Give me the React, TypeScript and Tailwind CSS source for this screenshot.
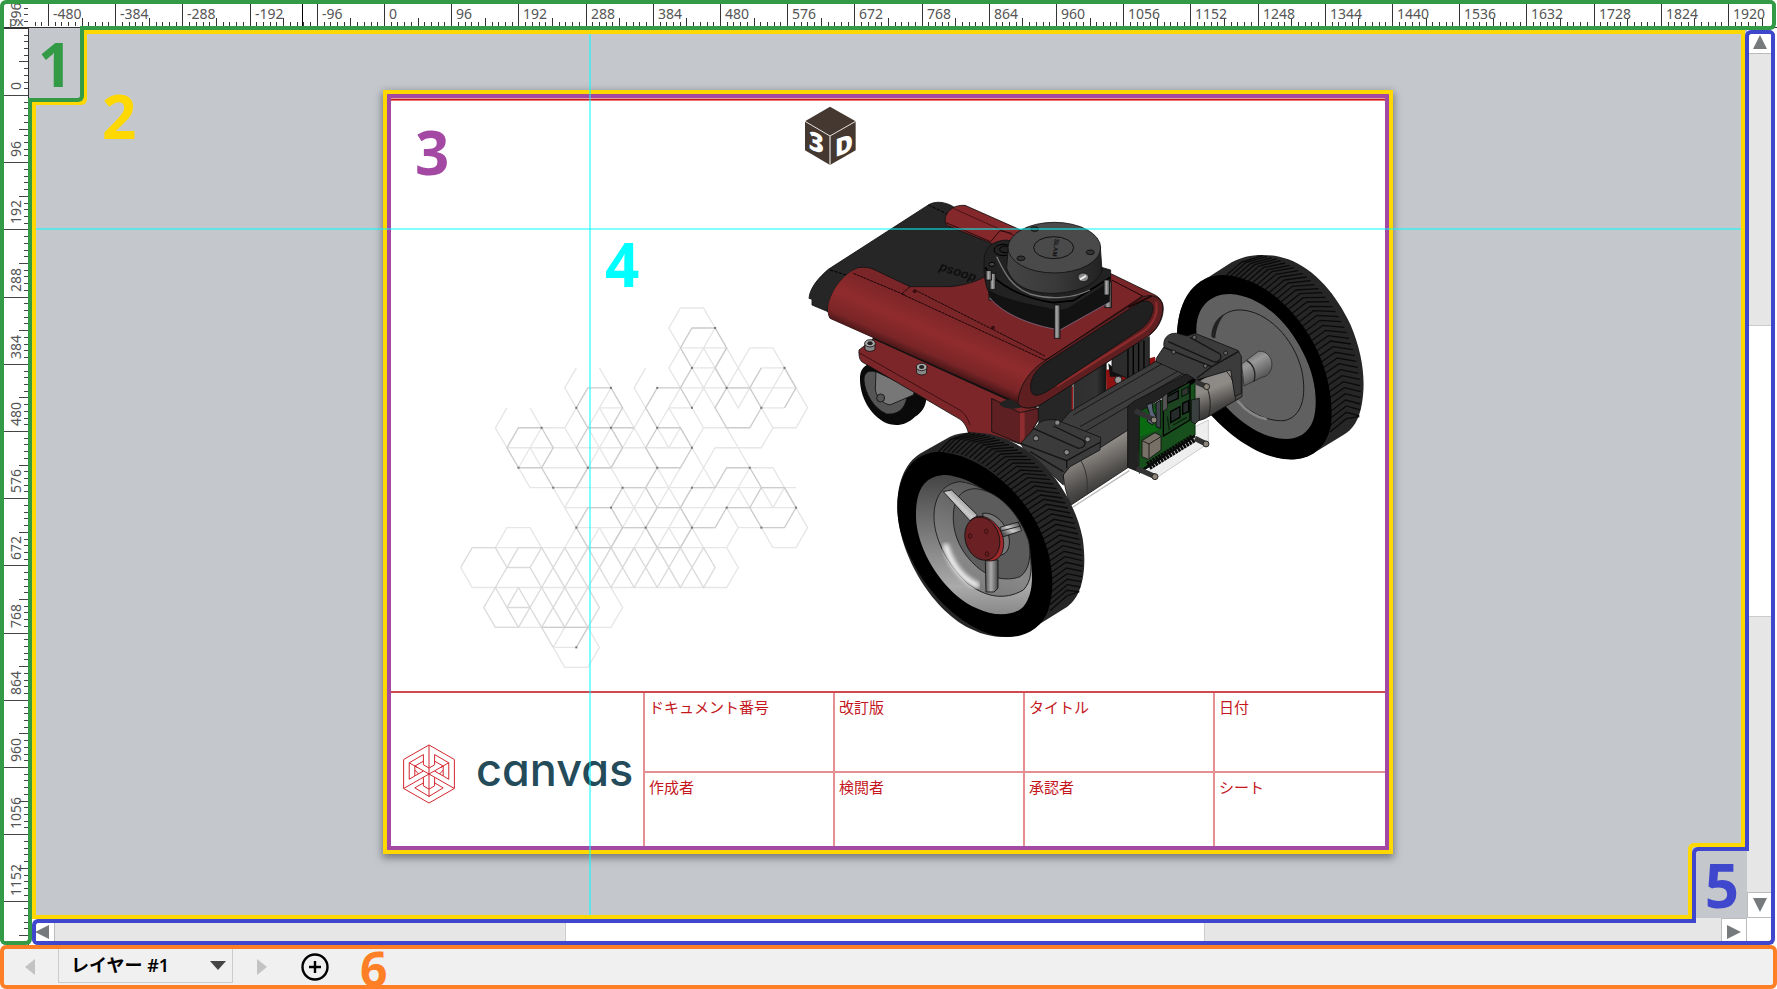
import React from "react";

const RULER_FONT = '"Noto Sans", sans-serif';
const LABEL_FONT = "font-['Open_Sans','Noto_Sans',sans-serif] font-bold leading-none";

const UNIT = 0.7;

type Tick = { pos: number; kind: number };

function ticks(origin: number, from: number, to: number): Tick[] {
  const list: Tick[] = [];
  for (let n = -60; n < 206; n++) {
    const pos = Math.round(origin + n * 9.6 * UNIT);
    if (pos < from || pos > to) continue;
    list.push({ pos, kind: n % 10 === 0 ? 2 : n % 5 === 0 ? 1 : 0 });
  }
  return list;
}

function labels(origin: number, from: number, to: number) {
  const list: { pos: number; text: string }[] = [];
  for (let n = -5; n <= 20; n++) {
    const pos = Math.round(origin + n * 96 * UNIT);
    if (pos < from || pos > to) continue;
    list.push({ pos, text: String(n * 96) });
  }
  return list;
}

function HorizontalRuler() {
  const top = [22, 18, 4];
  return (
    <svg className="block h-7 w-full overflow-hidden" aria-label="Horizontal ruler" role="img">
      {ticks(384, 30, 1771).map((t) => (
        <rect key={t.pos} x={t.pos} y={top[t.kind]} width={1} height={26 - top[t.kind]} fill="#333" />
      ))}
      <rect x={302} y={4} width={1} height={22} fill="#000" />
      {labels(384, 30, 1740).map((l) => (
        <text key={l.text} x={l.pos + 5} y={19} fontSize={14} fontFamily={RULER_FONT} fill="#555">
          {l.text}
        </text>
      ))}
      <rect x={0} y={27} width="100%" height={1} fill="#333" />
      <text x={9} y={26} fontSize={13} fontFamily={RULER_FONT} fill="#555">px</text>
    </svg>
  );
}

function VerticalRuler() {
  const left = [24, 19, 4];
  return (
    <svg className="block h-full w-[29px] overflow-visible" aria-label="Vertical ruler" role="img">
      {ticks(67, -20, 913).map((t) => (
        <rect key={t.pos} x={left[t.kind]} y={t.pos} width={28 - left[t.kind]} height={1} fill="#444" />
      ))}
      {labels(67, -10, 913).map((l) => (
        <text
          key={l.text}
          transform={`translate(21 ${l.pos - 5}) rotate(-90)`}
          fontSize={14}
          fontFamily={RULER_FONT}
          fill="#555"
        >
          {l.text}
        </text>
      ))}
      <rect x={4} y={0} width={24} height={1} fill="#333" />
      <rect x={28} y={0} width={1} height="100%" fill="#333" />
    </svg>
  );
}

/* ---------- hexagon pattern ---------- */

const hexStrong = [
  "19,2 20,1 22,1 23,2 22,3 23,4 25,4", "25,4 26,5 25,6 23,6 22,5 23,4", "19,2 20,3 19,4 20,5", "17,4 19,4",
  "17,4 16,5 17,6 19,6 20,7 19,8 17,8 16,7 17,6", "11,4 13,4 14,5 13,6 11,6 10,5 11,4", "25,4 26,3",
  "4,7 5,6 7,6", "7,6 8,7 7,8 5,8", "4,7 5,8", "7,8 8,9 10,9 11,8 10,7 11,6", "13,6 15,6", "11,8 13,8 14,7 13,6", "14,9 16,9 17,8",
  "14,9 13,10 14,11 16,11 17,10 16,9", "11,10 13,10", "11,10 10,11 11,12 13,12 14,11", "20,9 22,9", "23,10 22,11 20,11 19,10 20,9",
  "22,9 23,8 25,8 26,9 28,9 29,10 28,11 26,11 25,10 26,9", "23,10 25,10", "17,10 19,10", "16,11 17,12 19,12 20,11",
  "28,5 29,4", "28,3 29,4", "10,17 11,16 7,16",
];
const hexMedium = [
  "5,12 7,12 8,13", "5,12 4,13 6,13 7,14", "3,14 4,13", "0,13 1,12 3,12 4,13", "3,14 2,15 3,16 5,16 7,14", "3,14 5,16",
  "4,15 6,15", "4,15 5,14", "6,13 7,12", "7,14 9,12", "7,12 11,16", "6,13 7,14 9,16", "6,15 7,16", "5,14 8,17", "7,16 11,12", "9,16 12,13",
  "9,16 11,14", "8,15 9,16", "11,12 13,14 15,12", "13,12 15,14 17,12", "15,12 17,14 19,12", "17,12 19,14 21,12", "19,12 21,14 22,13 21,12",
  "11,14 13,12", "9,12 12,15 11,16", "9,14 10,13 11,12",
];
const hexLight = [
  "19,2 18,1 19,0 21,0 22,1 25,4", "19,2 18,3 19,4", "19,2 23,2", "22,1 20,3", "21,2 24,5 25,4", "20,3 22,3", "23,2 21,4 20,5", "20,3 22,5", "21,2 22,3",
  "24,3 25,2 27,2 28,3 30,5 29,6 27,6 26,5", "24,3 23,4", "26,3 28,3 26,5 28,5", "19,4 29,4", "23,6 25,8", "27,6 26,7 22,7 21,8",
  "10,3 9,4 10,5", "12,3 13,4", "16,3 15,4 16,5", "13,4 11,6", "12,5 14,5", "12,5 14,7", "14,5 15,6", "17,6 19,4", "18,5 20,5", "18,5 20,7",
  "4,5 3,6 4,7", "6,5 7,6 9,6 10,5", "4,7 20,7", "5,8 6,9 8,9", "7,6 5,8", "6,7 7,8", "6,7 7,8 17,8", "9,6 10,7",
  "8,9 10,11", "10,9 29,9", "9,10 29,10", "10,11 22,11", "11,8 9,10", "11,6 16,11", "13,6 11,8", "13,8 15,10 17,12", "15,6 13,8", "17,8 13,12",
  "15,6 19,10", "19,8 15,12", "16,7 20,11", "16,5 13,8", "17,6 18,7 19,6", "21,6 20,7", "21,6 23,6", "20,5 21,6", "20,7 22,9", "21,8 17,12", "22,9 19,12",
  "25,8 27,8 29,10 30,11 29,12 27,12 26,11 24,11 23,10", "25,8 23,10", "24,9 25,10", "26,9 27,10 28,9", "24,11 23,12 1,12",
  "20,11 21,12", "23,12 24,13 23,14 1,14 0,13", "3,12 4,11 6,11 7,12", "12,11 14,13", "12,11 10,13", "10,11 9,12", "14,11 12,13", "16,11 14,13",
  "13,14 14,15 13,16 3,16", "8,17 9,18 11,18 12,17 11,16", "8,17 10,17", "9,16 8,17", "16,11 19,14", "18,11 19,12", "18,11 16,13",
];
const hexDots =
  "22,1 20,3 28,3 23,4 17,4 13,4 10,5 20,5 26,5 7,6 13,6 17,6 20,7 5,8 11,8 17,8 25,8 8,9 14,9 20,9 13,10 23,10 29,10 10,11 16,11 20,11 26,11 10,17";

const node = (s: string): [number, number] => {
  const [i, j] = s.split(",").map(Number);
  return [212 + i * 34.7, 54 + j * 59.9];
};
const hexPath = (lines: string[]) =>
  lines.map((l) => "M" + l.trim().split(" ").map((p) => node(p).join(" ")).join("L")).join("");

function HexPattern() {
  return (
    <g transform="translate(390 290) scale(0.3333)" fill="none" strokeWidth={4}>
      <path d={hexPath(hexLight)} stroke="#e6e6e6" />
      <path d={hexPath(hexMedium)} stroke="#dadada" />
      <path d={hexPath(hexStrong)} stroke="#cccccc" />
      {hexDots.split(" ").map((d) => {
        const [x, y] = node(d);
        return <rect key={d} x={x - 3} y={y - 3} width={6} height={6} fill="#777" />;
      })}
    </g>
  );
}

/* ---------- robot ---------- */

type P = [number, number];
const bez = (p: P[], t: number): P => {
  const u = 1 - t;
  const f = (k: 0 | 1) =>
    u * u * u * p[0][k] + 3 * u * u * t * p[1][k] + 3 * u * t * t * p[2][k] + t * t * t * p[3][k];
  return [f(0), f(1)];
};
function treads(inner: P[], outer: P[], count: number) {
  let d = "";
  for (let n = 0; n < count; n++) {
    const t = n / count;
    const a = bez(inner, t);
    const b = bez(outer, Math.min(1, t + 0.05));
    const m1 = bez(outer, t);
    const m: P = [a[0] * 0.5 + m1[0] * 0.5 + 4, a[1] * 0.5 + m1[1] * 0.5 - 8];
    d += `M${a[0].toFixed(0)} ${a[1].toFixed(0)}L${m[0].toFixed(0)} ${m[1].toFixed(0)}L${b[0].toFixed(0)} ${b[1].toFixed(0)}`;
  }
  return d;
}

const edge = { stroke: "#111", strokeWidth: 2.5 };

function RightWheel() {
  return (
    <g transform="translate(1080 230) scale(0.3333)">
      <path d="M291 320C292 220 335 165 385 142L455 97C500 70 570 68 625 88C705 118 770 195 812 285C848 370 858 450 846 520C838 570 818 600 790 615L700 670C650 700 590 690 520 655C430 600 340 520 305 420Z" fill="#262626" />
      <path d={treads([[440, 135], [600, 160], [750, 380], [750, 625]], [[520, 75], [700, 75], [870, 330], [838, 560]], 38)} fill="none" stroke="#0a0a0a" strokeWidth={4} />
      <path d="M291 320C292 200 350 135 430 135C530 140 625 215 690 320C745 410 762 520 752 590C735 665 680 695 610 687C520 675 420 600 350 500C305 430 291 370 291 320Z" fill="#000" />
      <path d="M349 300C350 230 390 192 450 192C540 197 620 270 668 365C708 440 715 520 700 570C680 625 630 635 580 622C500 600 420 530 380 440C358 385 349 340 349 300Z" fill="#606060" />
      <path d="M400 325C402 268 435 238 485 240C560 245 640 320 665 420C682 500 665 562 612 572C560 575 500 545 465 500" fill="none" stroke="#1a1a1a" strokeWidth={3} />
      <path d="M394 320C394 290 410 262 434 252C416 275 408 300 406 325Z" fill="#222" />
      <path d="M472 512C500 545 530 562 560 568" fill="none" stroke="#888" strokeWidth={8} />
      <path d="M485 402L535 364C562 360 580 388 575 412C570 432 560 440 545 442L492 468Z" fill="url(#axle)" stroke="#222" strokeWidth={2} />
      <path d="M500 392C520 402 530 428 522 455" fill="none" stroke="#222" strokeWidth={4} />
    </g>
  );
}

function Body() {
  return (
    <g transform="translate(790 190) scale(0.3333)">
      {/* caster */}
      <path d="M210 560C212 535 225 525 245 520L410 620C408 650 395 668 375 680C350 705 320 710 290 700C240 675 208 620 210 560Z" fill="#0a0a0a" />
      <path d="M222 570C222 548 235 540 255 545L350 625C345 655 325 675 290 672C250 655 225 610 222 570Z" fill="#555" {...edge} />
      <path d="M258 545L375 600L370 615L300 645C275 640 260 620 256 600Z" fill="#777" {...edge} />
      <circle cx="272" cy="624" r="12" fill="#555" {...edge} />
      {/* columns and fins */}
      <path d="M745 600L848 560L848 720L745 750Z" fill="#262626" />
      <path d="M850 560L950 505L950 640L850 710Z" fill="url(#column)" />
      <path d="M847 590V690" stroke="#a01818" strokeWidth={4} />
      <path d="M948 540L1095 500L1100 530L950 610Z" fill="#8f1212" />
      <path d="M955 520L1000 560L960 560Z" fill="#111" />
      <path d="M966 500L1078 440L1078 530L1020 568L966 545Z" fill="#2c2c2c" {...edge} />
      <path d="M1014 475V565M1030 468V556M1046 460V546M1062 452V538" stroke="#000" strokeWidth={4} />
      <circle cx="985" cy="570" r="11" fill="#999" {...edge} />
      {/* lower plate */}
      <path d="M207 480L252 445L690 640L745 655L745 690L700 765L605 735L535 728C530 708 520 692 500 682L215 515C208 508 206 495 207 480Z" fill="#7c2629" {...edge} />
      <path d="M207 488L500 655C520 665 532 680 540 705" fill="none" stroke="#3d1012" strokeWidth={3} />
      <path d="M605 625L690 668L745 655L745 690L702 765L605 725Z" fill="#5e2022" {...edge} />
      <path d="M690 668L704 668L704 760L690 758Z" fill="#8e2c2f" />
      <path d="M250 440L690 640" stroke="#111" strokeWidth={14} />
      <ellipse cx="668" cy="642" rx="38" ry="14" fill="#222" />
      {/* black rear panel */}
      <path d="M57 325C60 290 90 260 115 238L415 45C435 32 465 35 490 50L640 120L620 300L480 290L360 290L150 380L66 345V328Z" fill="#262626" {...edge} />
      <path d="M120 240L190 262M415 45L480 76" fill="none" stroke="#000" strokeWidth={3} strokeDasharray="10 4" />
      <text x="0" y="0" transform="translate(560 256) rotate(198)" fontSize="38" fontFamily="Liberation Sans, sans-serif" fontStyle="italic" fontWeight="700" fill="#0d0d0d">doosd</text>
      {/* rear red strip */}
      <path d="M466 85C470 60 495 44 525 46L710 128L650 190L600 158L475 108C466 102 464 96 466 85Z" fill="#84282b" {...edge} />
      <path d="M490 55L690 145" stroke="#2b0a0b" strokeWidth={2} />
      <path d="M468 98L602 155L630 122L665 130" fill="none" stroke="#2b0a0b" strokeWidth={3} />
      {/* body */}
      <path d="M115 345C125 300 160 250 205 233C225 230 240 232 255 240L360 290H480C540 284 575 268 600 250L965 252L1095 315C1120 328 1125 352 1115 385C1105 412 1090 428 1075 438L750 645C720 660 690 655 684 635L120 385C114 375 113 360 115 345Z" fill="#7a2629" {...edge} />
      <path d="M115 345C125 300 160 250 205 234L765 512C720 540 688 590 684 638L120 385C114 375 113 360 115 345Z" fill="url(#roll)" />
      <path d="M190 250L345 315M360 290L335 312L765 510L795 495M375 300L765 498" fill="none" stroke="#1c0506" strokeWidth={3} strokeDasharray="9 2" />
      <path d="M765 512L1058 318L965 270" fill="none" stroke="#1c0506" strokeWidth={3} />
      <circle cx="374" cy="304" r="6" fill="#3a0f11" />
      <circle cx="609" cy="413" r="6" fill="#3a0f11" />
      <path d="M684 640C685 590 720 540 765 512L1060 320C1085 312 1112 320 1118 345C1121 380 1105 415 1075 438L750 645C720 660 690 655 684 640Z" fill="#5f1f21" {...edge} />
      <path d="M1098 335C1106 370 1090 405 1055 428L800 588" fill="none" stroke="#8c2a2c" strokeWidth={7} />
      <path d="M722 590C722 560 745 530 780 510L1030 350C1065 322 1095 330 1088 365C1080 395 1060 412 1045 422L770 605C740 622 722 620 722 590Z" fill="#202020" {...edge} />
      <path d="M1015 352L1085 318" stroke="#1c0506" strokeWidth={5} />
      {/* screws */}
      {[[240, 466], [395, 537]].map(([x, y]) => (
        <g key={x}>
          <path d={`M${x - 15} ${y - 6}V${y + 12}C${x - 8} ${y + 20} ${x + 8} ${y + 20} ${x + 15} ${y + 12}V${y - 6}Z`} fill="#888" {...edge} />
          <ellipse cx={x} cy={y - 6} rx="16" ry="11" fill="#aaa" {...edge} />
          <ellipse cx={x} cy={y - 6} rx="8" ry="6" fill="#222" />
        </g>
      ))}
      {/* lidar */}
      {[[597, 265, 65], [945, 275, 78]].map(([x, y, h]) => (
        <rect key={x} x={x} y={y} width="19" height={h} fill="url(#post)" {...edge} />
      ))}
      <path d="M592 290L600 322C640 370 720 404 810 418L958 335V280Z" fill="#121212" {...edge} />
      <path d="M600 324C640 372 720 406 810 420L958 337" fill="none" stroke="#7c7c9a" strokeWidth={2} />
      <path d="M583 205C585 170 610 152 650 150L962 240V275L840 352C820 364 790 362 770 354C690 340 620 320 592 298C585 275 580 250 583 205Z" fill="#222" {...edge} />
      <path d="M585 232C620 285 700 325 790 338L850 332L962 262" fill="none" stroke="#000" strokeWidth={5} />
      <path d="M620 200C640 240 660 290 720 312C780 330 850 325 900 300" fill="none" stroke="#777" strokeWidth={4} />
      <ellipse cx="640" cy="180" rx="28" ry="17" fill="none" stroke="#000" strokeWidth={3} />
      <ellipse cx="645" cy="178" rx="16" ry="10" fill="none" stroke="#000" strokeWidth={3} />
      <ellipse cx="606" cy="223" rx="9" ry="6" fill="#444" stroke="#000" strokeWidth={3} />
      <path d="M655 170L650 235C670 290 720 310 790 310C870 308 925 280 936 240L931 170Z" fill="url(#drum)" {...edge} />
      <ellipse cx="793" cy="173" rx="139" ry="76" fill="#4a4a4a" {...edge} />
      <ellipse cx="791" cy="173" rx="60" ry="33" fill="none" stroke="#111" strokeWidth={3} />
      <text transform="translate(794 146) rotate(97)" fontSize="19" fontFamily="Liberation Sans, sans-serif" fontWeight="700" fill="#111">SLAM</text>
      {[[734, 117], [693, 205], [901, 187]].map(([x, y]) => (
        <ellipse key={x} cx={x} cy={y} rx="12" ry="7" fill="#333" stroke="#111" strokeWidth={3} />
      ))}
      <ellipse cx="880" cy="262" rx="16" ry="13" fill="#888" {...edge} />
      <path d="M870 268L888 258" stroke="#eee" strokeWidth={6} />
      {[[793, 345, 100], [600, 250, 48], [942, 270, 45], [588, 242, 28]].map(([x, y, h]) => (
        <rect key={x} x={x} y={y} width="17" height={h} fill="url(#post)" {...edge} />
      ))}
    </g>
  );
}

function Chassis() {
  return (
    <g transform="translate(1080 230) scale(0.3333)">
      {/* acrylic plate */}
      <path d="M345 590L385 570V640L235 740L190 730L345 630Z" fill="#eee" stroke="#ccc" strokeWidth={3} />
      {/* right motor */}
      <path d="M330 470L445 400L486 440V500L385 560C370 570 350 575 335 570Z" fill="url(#motor)" {...edge} />
      <path d="M375 460C392 490 395 530 385 560M440 425C460 445 470 480 466 512" fill="none" stroke="#222" strokeWidth={3} />
      {/* left motor */}
      <path d="M-55 640L145 540V712L-28 826C-42 790 -52 750 -52 700Z" fill="url(#motor)" {...edge} />
      <path d="M-5 680C18 712 26 750 20 794" fill="none" stroke="#333" strokeWidth={3} />
      <path d="M-22 832L148 722" stroke="#bbb" strokeWidth={4} />
      {/* beam */}
      <path d="M-60 580L-30 545L260 375L345 405L330 440L160 530V590L50 660L-20 640Z" fill="#3d3d3d" {...edge} />
      <path d="M-20 555L275 385M0 590L310 415M15 605L320 425" fill="none" stroke="#171717" strokeWidth={3} />
      {/* right bracket */}
      <path d="M229 385L252 350C248 325 265 308 290 310L322 318L345 310L475 362L484 380V490L465 500L452 420L350 450L229 395Z" fill="#3b3b3b" {...edge} />
      <path d="M265 335L400 395C415 400 428 385 420 372L330 322M252 352L395 410L475 365M395 410L350 445" fill="none" stroke="#141414" strokeWidth={4} />
      {[[281, 366], [376, 408], [437, 369], [343, 322]].map(([x, y]) => (
        <circle key={x} cx={x} cy={y} r="6" fill="#666" {...edge} />
      ))}
      {/* left bracket */}
      <path d="M-178 640L-125 582C-110 565 -90 572 -75 568L62 622L60 660L-30 710L-50 735V765L-170 655Z" fill="#3b3b3b" {...edge} />
      <path d="M-140 595L-5 655C10 655 20 645 12 632L-80 588M-178 640L-40 692L62 636M-40 692V715M-150 665L-50 725" fill="none" stroke="#141414" strokeWidth={4} />
      {[[-132, 625], [-40, 667], [23, 628], [-68, 578]].map(([x, y]) => (
        <circle key={x} cx={x} cy={y} r="8" fill="#888" {...edge} />
      ))}
      {/* circuit board */}
      <path d="M143 530L160 515L320 432L340 445L180 545L175 725L143 712Z" fill="#222" {...edge} />
      <path d="M178 545L345 458V615L178 730Z" fill="#17501c" stroke="#062b0a" strokeWidth={3} />
      <path d="M180 560L235 530V600L180 620Z" fill="#0a6b12" />
      <path d="M250 500L330 455V570L250 618Z" fill="#1c4420" stroke="#000" strokeWidth={4} />
      <path d="M272 545L300 530V562L272 578ZM308 520L326 512V545L308 553ZM262 500L295 482V505L262 520Z" fill="#262b2c" stroke="#000" strokeWidth={4} />
      <path d="M262 560L268 600M280 585L320 562M305 480L325 470V490L305 500Z" fill="#333" stroke="#0a200c" strokeWidth={4} />
      <path d="M228 520L242 510V595L228 590Z" fill="#3d4248" stroke="#111" strokeWidth={3} />
      <path d="M200 525L216 518L220 545L228 560L218 585L202 575L208 550Z" fill="#5b6478" stroke="#111" strokeWidth={3} />
      <path d="M248 500L262 490V535L248 545Z" fill="#555" stroke="#111" strokeWidth={2} />
      <path d="M186 632L225 608L243 618V660L205 688L186 680Z" fill="#777067" {...edge} />
      <path d="M186 632L207 642L243 620M207 642V686" fill="none" {...edge} />
      <path d="M334 510L358 505V570L345 582L334 575Z" fill="#3a3f40" {...edge} />
      <path d="M205 708L340 625" stroke="#0a0a0a" strokeWidth={26} strokeDasharray="8 2" />
      <path d="M180 725L345 618" stroke="#0b0b0b" strokeWidth={8} />
      {[[345, 455, 380, 470], [345, 625, 378, 642], [165, 542, 222, 570], [170, 715, 225, 740]].map(([a, b, c, d]) => (
        <g key={a + "-" + b}>
          <path d={`M${a} ${b}L${c} ${d}`} stroke="#333" strokeWidth={16} />
          <circle cx={c} cy={d} r="9" fill="#8b8478" {...edge} />
        </g>
      ))}
    </g>
  );
}

function FrontWheel() {
  return (
    <g transform="translate(860 400) scale(0.3333)">
      <path d="M112 320C112 240 140 180 190 155L270 110C330 85 420 100 485 142C570 195 645 300 668 415C682 510 667 590 622 620L510 690C460 720 390 715 340 690C220 640 112 460 112 320Z" fill="#262626" />
      <path d={treads([[235, 155], [430, 150], [580, 400], [570, 650]], [[300, 98], [510, 85], [715, 360], [658, 575]], 42)} fill="none" stroke="#0a0a0a" strokeWidth={4} />
      <path d="M112 320C113 210 170 155 240 155C350 165 460 250 525 360C580 460 588 560 565 630C540 700 470 720 410 708C310 685 210 590 155 480C120 410 112 360 112 320Z" fill="#000" />
      <path d="M168 345C168 260 200 225 260 225C350 235 440 310 490 410C525 490 525 580 490 620C460 650 400 650 350 625C270 590 205 500 180 420C170 385 168 365 168 345Z" fill="url(#rim)" />
      <path d="M222 350C222 290 250 250 300 245C390 255 470 340 505 430C520 500 515 545 490 570C430 605 370 588 320 548C255 485 222 410 222 350Z" fill="url(#rimInner)" stroke="#222" strokeWidth={3} />
      <path d="M258 440C272 490 305 535 350 555" fill="none" stroke="#fff" strokeOpacity={0.9} strokeWidth={18} strokeLinecap="round" filter="url(#soft)" />
      <path d="M280 360C278 300 300 268 345 266C410 270 475 335 505 420C515 460 510 510 480 530C440 545 390 535 350 500C305 460 282 410 280 360Z" fill="#5c5c5c" stroke="#222" strokeWidth={3} />
      <path d="M368 340C410 335 445 380 448 420C450 445 440 460 425 465L380 440Z" fill="#777" {...edge} />
      <path d="M250 275L275 270L352 345L335 368Z" fill="url(#spoke)" {...edge} />
      <path d="M420 382L475 366L485 392L425 412Z" fill="url(#spoke)" {...edge} />
      <path d="M420 394L482 378" stroke="#222" strokeWidth={3} />
      <path d="M376 480H414V565L402 576H378Z" fill="url(#post)" {...edge} />
      <path d="M330 362C350 342 380 345 405 370C430 395 438 430 425 460C415 482 395 485 380 482Z" fill="#a3282c" {...edge} />
      <ellipse cx="367" cy="416" rx="51" ry="66" transform="rotate(-18 367 416)" fill="#6b2023" {...edge} />
      {[[330, 408], [379, 394], [381, 462]].map(([x, y]) => (
        <ellipse key={x} cx={x} cy={y} rx="5" ry="7" fill="#6b2023" stroke="#220608" strokeWidth={2} />
      ))}
    </g>
  );
}

function CubeIcon() {
  return (
    <g transform="translate(780 90) scale(0.3333)">
      <path d="M150 50L227 94V181L150 225L75 181V94Z" fill="#443830" />
      <path d="M75 94L150 138L227 94" fill="none" stroke="#e8e4e0" strokeWidth={3} />
      <path d="M150 138V225" stroke="#b9b3ae" strokeWidth={5} />
      <text transform="translate(86 176) skewY(20)" fontSize="78" fontWeight="800" fontFamily="Open Sans, sans-serif" fill="#fff">3</text>
      <text transform="translate(165 202) skewY(-20)" fontSize="74" fontWeight="800" fontFamily="Open Sans, sans-serif" fill="#fff">D</text>
    </g>
  );
}

function Drawing() {
  return (
    <svg className="block w-full" viewBox="391 101 994 590" role="img" aria-label="Robot drawing">
      <defs>
        <linearGradient id="roll" gradientUnits="userSpaceOnUse" x1="470" y1="360" x2="400" y2="520">
          <stop offset="0" stopColor="#7a2528" />
          <stop offset="0.45" stopColor="#902b2d" />
          <stop offset="0.8" stopColor="#7a2527" />
          <stop offset="1" stopColor="#3a1213" />
        </linearGradient>
        <linearGradient id="column"><stop offset="0" stopColor="#2e2e2e" /><stop offset="0.7" stopColor="#333" /><stop offset="1" stopColor="#111" /></linearGradient>
        <linearGradient id="drum"><stop offset="0" stopColor="#444" /><stop offset="0.5" stopColor="#3a3a3a" /><stop offset="1" stopColor="#222" /></linearGradient>
        <linearGradient id="post"><stop offset="0" stopColor="#555" /><stop offset="0.45" stopColor="#aaa" /><stop offset="1" stopColor="#444" /></linearGradient>
        <linearGradient id="spoke" x1="0" y1="1" x2="1" y2="0"><stop offset="0.2" stopColor="#555" /><stop offset="0.5" stopColor="#ccc" /><stop offset="0.9" stopColor="#555" /></linearGradient>
        <linearGradient id="axle" x1="0" y1="0" x2="0.5" y2="1"><stop offset="0" stopColor="#555" /><stop offset="0.4" stopColor="#999" /><stop offset="1" stopColor="#444" /></linearGradient>
        <linearGradient id="motor" x1="0.3" y1="0.1" x2="0.6" y2="0.95"><stop offset="0" stopColor="#8a8a8a" /><stop offset="0.4" stopColor="#8e8a86" /><stop offset="0.75" stopColor="#4c4a48" /><stop offset="1" stopColor="#2a2a2a" /></linearGradient>
        <linearGradient id="rim" x1="0.5" y1="0" x2="0.5" y2="1"><stop offset="0" stopColor="#444" /><stop offset="0.4" stopColor="#777" /><stop offset="0.8" stopColor="#aaa" /><stop offset="1" stopColor="#888" /></linearGradient>
        <linearGradient id="rimInner" x1="0.6" y1="0" x2="0.3" y2="1"><stop offset="0" stopColor="#555" /><stop offset="0.7" stopColor="#888" /><stop offset="1" stopColor="#777" /></linearGradient>
        <filter id="soft"><feGaussianBlur stdDeviation="7" /></filter>
      </defs>
      <HexPattern />
      <CubeIcon />
      <RightWheel />
      <Body />
      <Chassis />
      <FrontWheel />
    </svg>
  );
}

function Logo() {
  return (
    <svg className="h-[60px] w-[54px] shrink-0" viewBox="20 19 160 182" fill="none" stroke="#d2232a" strokeWidth={3} aria-hidden="true">
      <path d="M100 22L177 66V154L100 198L23 154V66Z" />
      <path d="M100 22V180M23 154L100 110L160 76M177 154L100 110L40 76" />
      <path d="M40 76L83 51V82L100 92L117 82V51L160 76" />
      <path d="M40 76V126L57 116V86L83 71M160 76V126L143 116V86L117 71" />
      <path d="M57 86L66 91M143 86L134 91M57 116L83 101M143 116L117 101M57 98L68 110M143 98L132 110" />
      <path d="M83 120V146L100 156L117 146V120" />
      <path d="M83 137L57 152L100 178L143 152L117 137" />
    </svg>
  );
}

const fields = ["ドキュメント番号", "改訂版", "タイトル", "日付", "作成者", "検閲者", "承認者", "シート"];

function TitleBlock() {
  return (
    <div className="flex h-[155px] border-t-2 border-[#cf4a50]">
      <div className="flex w-[252px] shrink-0 items-center pl-[11px] pt-2">
        <Logo />
        <span className="pb-2 pl-5 font-['Inter',sans-serif] text-[45px] leading-none font-medium text-[#234b5a] [font-feature-settings:'cv11','ss03']">
          canvas
        </span>
      </div>
      <dl className="grid flex-1 grid-cols-[190px_190px_190px_1fr] grid-rows-[80px_1fr]">
        {fields.map((f, i) => (
          <div key={f} className={"border-l-2 border-[#e58f92] pt-0.5 pl-1 " + (i < 4 ? "border-b-2" : "")}>
            <dt className="font-['Noto_Sans_CJK_JP',sans-serif] text-[15px] leading-6 text-[#c4161c]">{f}</dt>
          </div>
        ))}
      </dl>
    </div>
  );
}

function Sheet() {
  return (
    <div className="relative w-[1010px] shrink-0 border-4 border-[#ffd800] bg-white shadow-[0_3px_8px_1px_rgba(0,0,0,0.4)]">
      <div className="border-4 border-[#a349a4]">
        <div className="h-[3px] border-y border-t-[#e8a0a0] border-b-[#e77] bg-[#c4161c]" />
        <Drawing />
        <TitleBlock />
      </div>
      <span className={"absolute top-7 left-7 text-[60px] text-[#a349a4] " + LABEL_FONT}>3</span>
      <span className={"absolute top-[140px] left-[218px] text-[60px] text-[#00ffff] " + LABEL_FONT}>4</span>
    </div>
  );
}

function Arrow({ d }: { d: string }) {
  return (
    <svg viewBox="0 0 14 14" className="size-3.5" aria-hidden="true">
      <path d={d} fill="currentColor" />
    </svg>
  );
}

function Annotations() {
  return (
    <div className="pointer-events-none absolute inset-0 z-10">
      {/* 2: workspace */}
      <div className="absolute top-[30px] right-8 bottom-[98px] left-[83px] border-t-4 border-r-4 border-[#ffd800]" />
      <div className="absolute top-[101px] right-[85px] bottom-[26px] left-8 border-b-4 border-l-4 border-[#ffd800]" />
      <div className="absolute top-[30px] left-8 h-[75px] w-[55px] rounded-br-md border-r-4 border-b-4 border-[#ffd800]" />
      <div className="absolute right-8 bottom-[26px] h-[76px] w-[57px] rounded-tl-md border-t-4 border-l-4 border-[#ffd800]" />
      {/* 5: scroll bars */}
      <div className="absolute top-[30px] right-0.5 bottom-0 left-8 rounded-md border-r-4 border-b-4 border-[#3f48cc]" />
      <div className="absolute top-[30px] right-0.5 bottom-[94px] w-[30px] rounded-t-md border-t-4 border-l-4 border-[#3f48cc]" />
      <div className="absolute right-[81px] bottom-0 left-8 h-[26px] rounded-l-md border-t-4 border-l-4 border-[#3f48cc]" />
      <div className="absolute right-7 bottom-[22px] h-[76px] w-[57px] rounded-tl-md border-t-4 border-l-4 border-[#3f48cc]" />
      {/* 1: rulers */}
      <div className="absolute top-0 right-px bottom-0 left-0 rounded-md border-t-4 border-l-4 border-[#339a46]" />
      <div className="absolute top-0 right-px left-20 h-[30px] rounded-r-md border-r-4 border-b-4 border-[#339a46]" />
      <div className="absolute top-[98px] bottom-0 left-0 w-8 rounded-b-md border-r-4 border-b-4 border-[#339a46]" />
      <div className="absolute top-[26px] left-7 h-[76px] w-14 rounded-br-md border-r-4 border-b-4 border-[#339a46]" />
      <span className={"absolute top-[34px] left-[38px] text-[60px] text-[#339a46] " + LABEL_FONT}>1</span>
      <span className={"absolute top-[86px] left-[102px] text-[60px] text-[#ffd800] " + LABEL_FONT}>2</span>
      <span className={"absolute right-[38px] bottom-[30px] text-[60px] text-[#3f48cc] " + LABEL_FONT}>5</span>
    </div>
  );
}

export default function App() {
  return (
    <div className="flex h-screen flex-col overflow-hidden bg-white">
      <main className="relative grid min-h-0 flex-1 grid-cols-[29px_minmax(0,1fr)_30px] grid-rows-[28px_minmax(0,1fr)_27px]">
        <div className="col-span-3">
          <HorizontalRuler />
        </div>
        <div className="row-span-2">
          <VerticalRuler />
        </div>

        <section id="workspace" className="relative flex items-start justify-center overflow-hidden bg-[#c4c7cc] pt-[62px]" aria-label="Workspace">
          <Sheet />
          <div className="absolute inset-x-0 top-[200px] h-0.5 bg-[#00ffff]/50" />
          <div className="absolute inset-y-0 left-[560px] w-0.5 bg-[#00ffff]/50" />
        </section>

        <div className="flex w-[26px] flex-col">
          <button type="button" aria-label="Scroll up" className="flex h-[26px] items-end justify-center border-b border-[#bbb] bg-white pb-1 text-[#777a7d]">
            <Arrow d="M7 0L14 14H0Z" />
          </button>
          <div role="scrollbar" aria-orientation="vertical" aria-controls="workspace" aria-valuenow={32} className="flex flex-1 flex-col bg-[#e6e6e6]">
            <div className="grow-[272] basis-0" />
            <div className="grow-[290] basis-0 border-y border-[#ccc] bg-white" />
            <div className="grow-[276] basis-0" />
          </div>
          <button type="button" aria-label="Scroll down" className="flex h-[26px] items-center justify-center border border-[#bbb] bg-white text-[#777a7d]">
            <Arrow d="M0 0H14L7 14Z" />
          </button>
        </div>

        <div className="flex h-[27px]">
          <button type="button" aria-label="Scroll left" className="flex w-[26px] items-center justify-center border-r border-[#bbb] bg-white text-[#777a7d]">
            <Arrow d="M0 7L14 0V14Z" />
          </button>
          <div role="scrollbar" aria-orientation="horizontal" aria-controls="workspace" aria-valuenow={31} className="flex flex-1 bg-[#e6e6e6]">
            <div className="grow-[511] basis-0" />
            <div className="grow-[638] basis-0 border-x border-[#ccc] bg-white" />
            <div className="grow-[517] basis-0" />
          </div>
          <button type="button" aria-label="Scroll right" className="flex w-[26px] items-center justify-center border border-[#bbb] bg-white text-[#777a7d]">
            <Arrow d="M0 0L14 7L0 14Z" />
          </button>
        </div>
        <div className="bg-white" />

        <Annotations />
      </main>

      <footer className="flex h-11 shrink-0 items-center rounded-md border-4 border-[#ff7f27] bg-[#f0f0f0]">
        <button type="button" aria-label="Previous layer" className="ml-5 flex w-3 justify-center text-[#c3c3c3]">
          <svg viewBox="0 0 10 16" className="h-4 w-2.5" aria-hidden="true"><path d="M10 0V16L0 8Z" fill="currentColor" /></svg>
        </button>
        <div className="relative ml-[22px] h-full w-[175px] pb-0.5">
          <select
            aria-label="Layer"
            className="h-full w-full appearance-none border border-t-0 border-[#ccc] bg-[#f0f0f0] pl-3 font-['Noto_Sans','Noto_Sans_CJK_JP',sans-serif] text-[18px] font-semibold text-black outline-none"
          >
            <option>レイヤー #1</option>
          </select>
          <svg viewBox="0 0 16 9" className="pointer-events-none absolute top-3 right-[7px] h-[9px] w-4" aria-hidden="true">
            <path d="M0 0H16L8 9Z" fill="#444" />
          </svg>
        </div>
        <button type="button" aria-label="Next layer" className="ml-[23px] flex w-3 justify-center text-[#c3c3c3]">
          <svg viewBox="0 0 10 16" className="h-4 w-2.5" aria-hidden="true"><path d="M0 0V16L10 8Z" fill="currentColor" /></svg>
        </button>
        <button type="button" aria-label="Add layer" className="ml-[33px] size-7 text-black">
          <svg viewBox="0 0 28 28" className="size-7" fill="none" stroke="currentColor" aria-hidden="true">
            <circle cx="14" cy="14" r="12.5" strokeWidth="2.4" />
            <path d="M14 8V20M8 14H20" strokeWidth="2.4" />
          </svg>
        </button>
        <span className={"ml-[31px] pt-1 text-[48px] text-[#ff7f27] " + LABEL_FONT}>6</span>
      </footer>
    </div>
  );
}
